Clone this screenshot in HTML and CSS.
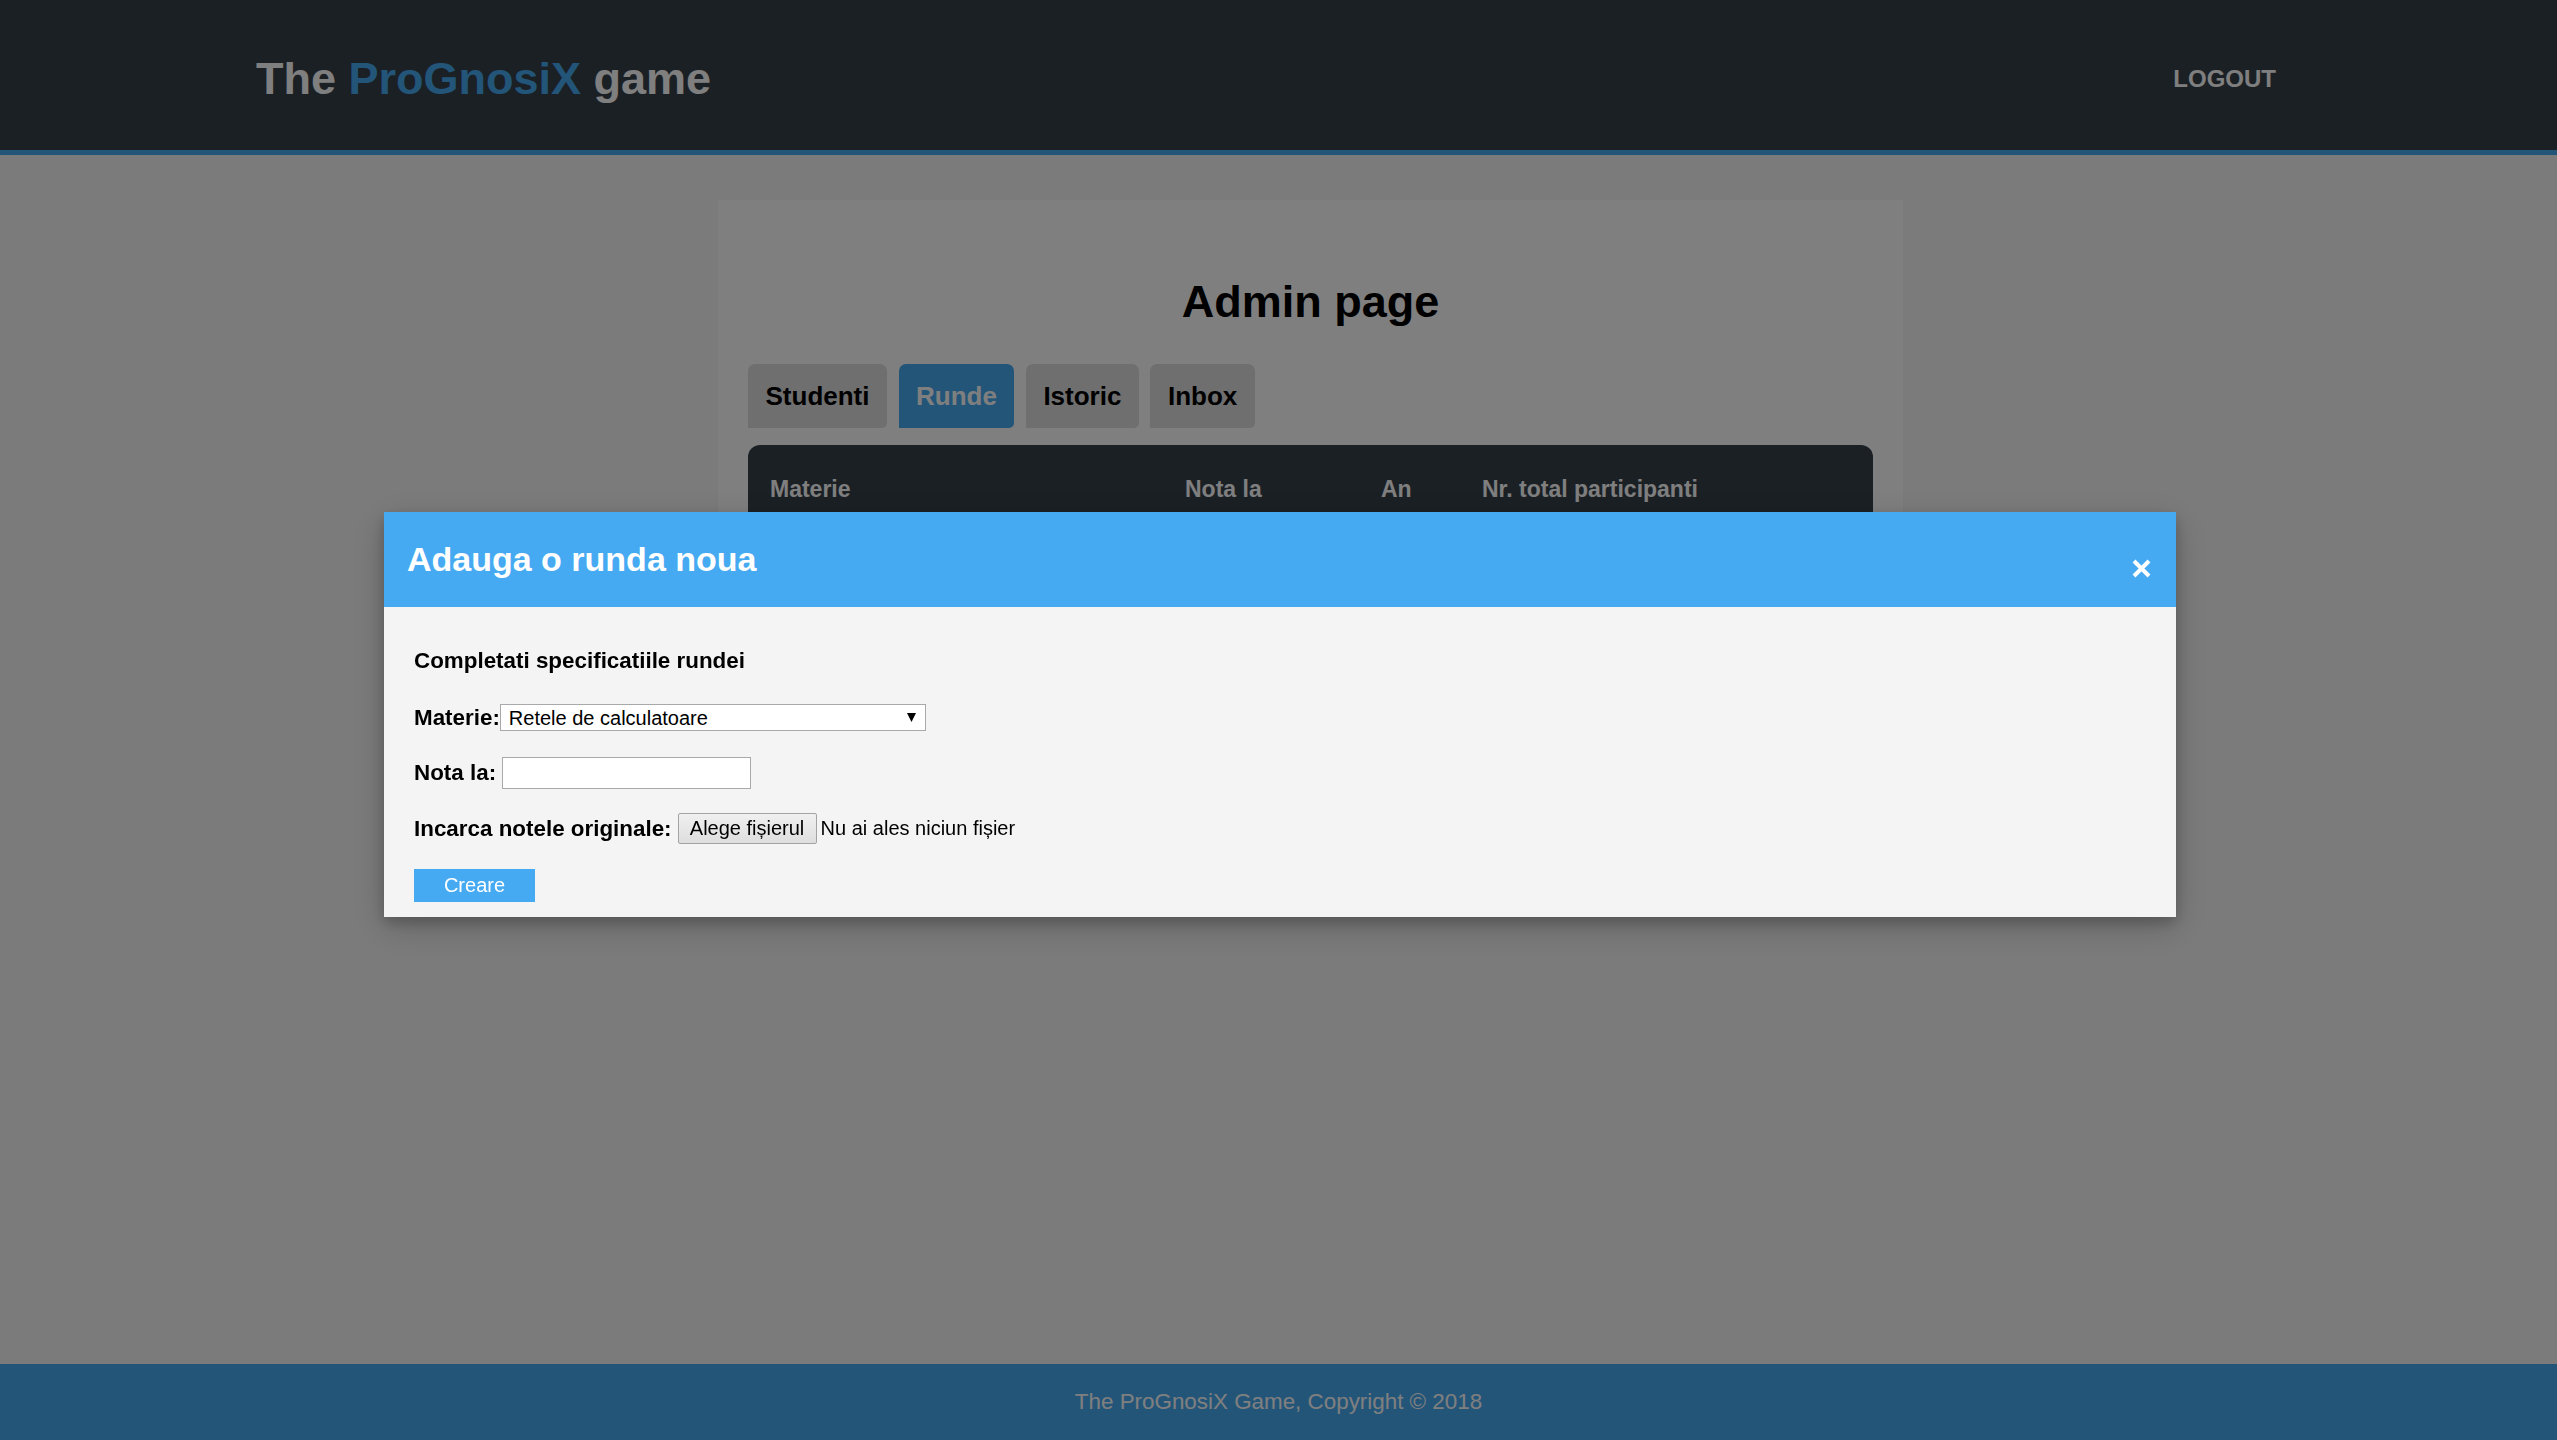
FILE: index.html
```html
<!DOCTYPE html>
<html lang="ro">
<head>
<meta charset="utf-8">
<title>The ProGnosiX game - Admin</title>
<link rel="stylesheet" href="styles.css">
</head>
<body>
<header class="topbar">
  <div class="brand">The <span class="accent">ProGnosiX</span> game</div>
  <a class="logout" href="#">LOGOUT</a>
</header>

<main class="main">
  <section class="card">
    <h1 class="page-title">Admin page</h1>
    <nav class="tabs">
      <button class="tab" type="button">Studenti</button>
      <button class="tab active" type="button">Runde</button>
      <button class="tab" type="button">Istoric</button>
      <button class="tab" type="button">Inbox</button>
    </nav>
    <div class="table">
      <div class="thead">
        <span>Materie</span>
        <span>Nota la</span>
        <span>An</span>
        <span>Nr. total participanti</span>
      </div>
    </div>
  </section>
</main>

<footer class="footer">The ProGnosiX Game, Copyright © 2018</footer>

<div class="backdrop"></div>
<div class="modal">
  <div class="modal-head">
    <h2 class="modal-title">Adauga o runda noua</h2>
    <button class="close" type="button" aria-label="close">
      <svg width="19" height="19" viewBox="0 0 19 19"><path d="M2 2 L17 17 M17 2 L2 17" stroke="#fff" stroke-width="4" fill="none"/></svg>
    </button>
  </div>
  <div class="modal-body">
    <div class="lead">Completati specificatiile rundei</div>
    <div class="row">
      <label class="lbl">Materie:</label>
      <div class="select-wrap">
        <select class="select"><option>Retele de calculatoare</option></select>
        <svg class="arrow" width="9" height="9" viewBox="0 0 9 9"><path d="M0 0 H9 L4.5 9 Z" fill="#000"/></svg>
      </div>
    </div>
    <div class="row">
      <label class="lbl">Nota la:</label>
      <input class="text-input" type="text">
    </div>
    <div class="row">
      <label class="lbl">Incarca notele originale:</label>
      <button class="file-btn" type="button">Alege fișierul</button>
      <span class="file-name">Nu ai ales niciun fișier</span>
    </div>
    <div class="row">
      <button class="create" type="button">Creare</button>
    </div>
  </div>
</div>
</body>
</html>
```

FILE: styles.css
```css
html, body {
  margin: 0;
  padding: 0;
}
body {
  font-family: "Liberation Sans", Arial, sans-serif;
  background: #f6f6f6;
  min-height: 100vh;
  display: flex;
  flex-direction: column;
  color: #000;
}

/* top bar */
.topbar {
  box-sizing: border-box;
  height: 155px;
  padding: 7px 281px 0 256px;
  background: #36404a;
  border-bottom: 5px solid #46aaf2;
  display: flex;
  justify-content: space-between;
  align-items: center;
}
.brand {
  font-size: 45px;
  font-weight: bold;
  color: #fff;
}
.accent {
  color: #46aaf2;
}
.logout {
  font-size: 24px;
  font-weight: bold;
  color: #fff;
  text-decoration: none;
}

/* main card */
.main {
  flex: 1;
}
.card {
  box-sizing: border-box;
  width: 1185px;
  margin: 45px 0 0 718px;
  padding: 76px 30px 30px 30px;
  background: #fff;
}
.page-title {
  margin: 0;
  font-size: 45px;
  font-weight: bold;
  text-align: center;
}
.tabs {
  display: flex;
  gap: 11.5px;
  margin-top: 36px;
}
.tab {
  height: 64px;
  padding: 0 17.5px;
  border: none;
  border-radius: 7px 7px 5px 0;
  background: #dedede;
  color: #000;
  font-family: inherit;
  font-size: 26px;
  font-weight: bold;
}
.tab.active {
  background: #46aaf2;
  color: #fff;
}
.table {
  margin-top: 17px;
}
.thead {
  display: grid;
  grid-template-columns: 415px 196px 101px 1fr;
  padding: 31px 22px;
  background: #36404a;
  border-radius: 12px 12px 0 0;
  color: #fff;
  font-size: 23px;
  font-weight: bold;
}

/* footer */
.footer {
  height: 76px;
  background: #46aaf2;
  color: #fff;
  font-size: 22.4px;
  display: flex;
  align-items: center;
  justify-content: center;
}

/* modal */
.backdrop {
  position: fixed;
  inset: 0;
  background: rgba(0, 0, 0, 0.5);
}
.modal {
  position: fixed;
  top: 512px;
  left: 384px;
  width: 1792px;
  background: #f4f4f4;
  box-shadow: 0 6px 13px rgba(0, 0, 0, 0.2), 0 10px 33px rgba(0, 0, 0, 0.19);
}
.modal-head {
  height: 95px;
  padding: 0 25px 0 23px;
  background: #46aaf2;
  display: flex;
  justify-content: space-between;
  align-items: center;
}
.modal-title {
  margin: 0;
  font-size: 34px;
  font-weight: bold;
  color: #fff;
}
.close {
  align-self: flex-start;
  margin-top: 47px;
  padding: 0;
  border: none;
  background: none;
  width: 19px;
  height: 19px;
  display: block;
}
.close svg {
  display: block;
}
.modal-body {
  padding: 41px 30px 15px 30px;
  font-size: 22.4px;
}
.lead {
  font-weight: bold;
}
.row {
  display: flex;
  align-items: center;
}
.row:nth-child(2) {
  margin-top: 30px;
}
.row:nth-child(3) {
  margin-top: 26px;
}
.row:nth-child(4) {
  margin-top: 24px;
}
.row:nth-child(5) {
  margin-top: 25px;
}
.lbl {
  font-weight: bold;
}
.select-wrap {
  position: relative;
  width: 426px;
  height: 27px;
}
.select {
  appearance: none;
  -webkit-appearance: none;
  box-sizing: border-box;
  width: 100%;
  height: 100%;
  margin: 0;
  padding: 0 0 0 8px;
  border: 1px solid #a9a9a9;
  border-radius: 0;
  background: #fff;
  color: #000;
  font-family: inherit;
  font-size: 20px;
}
.arrow {
  position: absolute;
  right: 10px;
  top: 9px;
}
.text-input {
  box-sizing: border-box;
  width: 249px;
  height: 32px;
  margin: 0 0 0 6px;
  border: 1px solid #a9a9a9;
  background: #fff;
  font-family: inherit;
  font-size: 20px;
}
.file-btn {
  box-sizing: border-box;
  width: 139px;
  height: 31px;
  padding: 0;
  margin: 0 4px 0 6px;
  border: 1px solid #a3a3a3;
  border-radius: 2px;
  background: linear-gradient(#f0f0f0, #dedede);
  color: #000;
  font-family: inherit;
  font-size: 20px;
}
.file-name {
  font-size: 20px;
}
.create {
  width: 121px;
  height: 33px;
  padding: 0;
  border: none;
  background: #46aaf2;
  color: #fff;
  font-family: inherit;
  font-size: 20px;
}
```
